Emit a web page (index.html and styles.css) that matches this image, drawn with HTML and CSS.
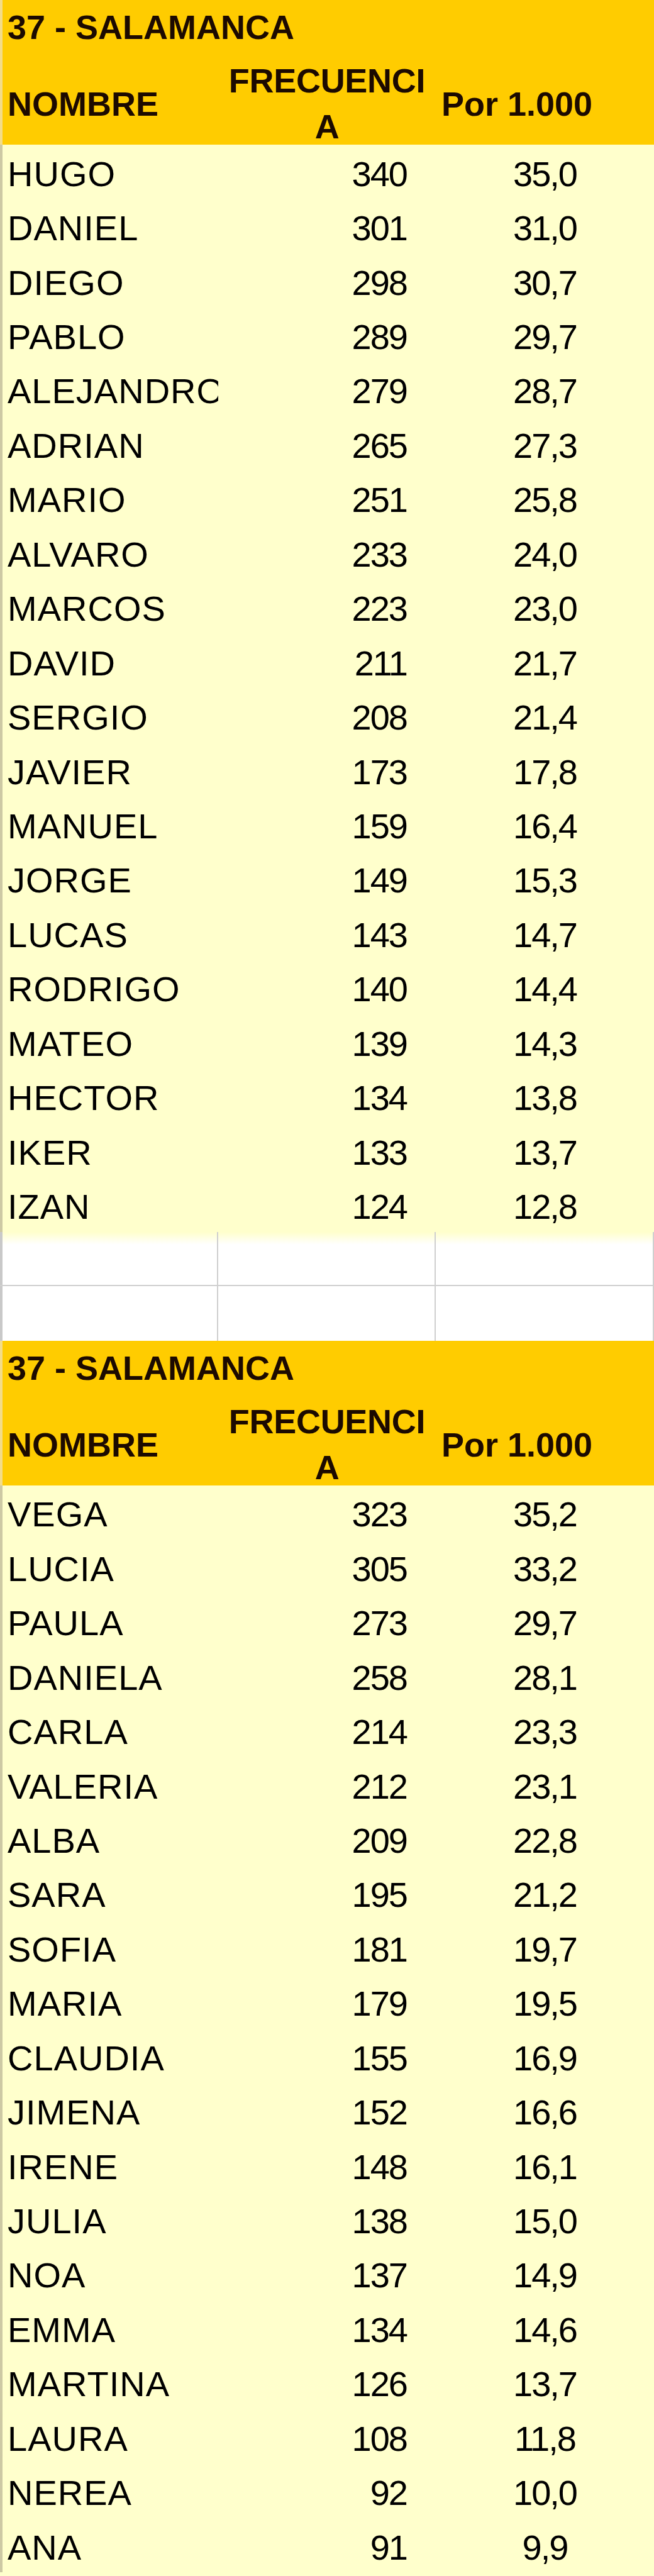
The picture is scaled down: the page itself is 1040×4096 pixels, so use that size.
FILE: index.html
```html
<!DOCTYPE html>
<html lang="es">
<head>
<meta charset="utf-8">
<title>37 - SALAMANCA</title>
<link rel="stylesheet" href="styles.css">
</head>
<body>
<div class="sheet">
  <section class="table">
    <div class="hdr">
      <div class="title">37 - SALAMANCA</div>
      <div class="cols">
        <div class="h-name">NOMBRE</div>
        <div class="h-freq">FRECUENCIA</div>
        <div class="h-per">Por 1.000</div>
      </div>
    </div>
    <div class="row"><div class="n">HUGO</div><div class="f">340</div><div class="p">35,0</div></div>
    <div class="row"><div class="n">DANIEL</div><div class="f">301</div><div class="p">31,0</div></div>
    <div class="row"><div class="n">DIEGO</div><div class="f">298</div><div class="p">30,7</div></div>
    <div class="row"><div class="n">PABLO</div><div class="f">289</div><div class="p">29,7</div></div>
    <div class="row"><div class="n">ALEJANDRO</div><div class="f">279</div><div class="p">28,7</div></div>
    <div class="row"><div class="n">ADRIAN</div><div class="f">265</div><div class="p">27,3</div></div>
    <div class="row"><div class="n">MARIO</div><div class="f">251</div><div class="p">25,8</div></div>
    <div class="row"><div class="n">ALVARO</div><div class="f">233</div><div class="p">24,0</div></div>
    <div class="row"><div class="n">MARCOS</div><div class="f">223</div><div class="p">23,0</div></div>
    <div class="row"><div class="n">DAVID</div><div class="f">211</div><div class="p">21,7</div></div>
    <div class="row"><div class="n">SERGIO</div><div class="f">208</div><div class="p">21,4</div></div>
    <div class="row"><div class="n">JAVIER</div><div class="f">173</div><div class="p">17,8</div></div>
    <div class="row"><div class="n">MANUEL</div><div class="f">159</div><div class="p">16,4</div></div>
    <div class="row"><div class="n">JORGE</div><div class="f">149</div><div class="p">15,3</div></div>
    <div class="row"><div class="n">LUCAS</div><div class="f">143</div><div class="p">14,7</div></div>
    <div class="row"><div class="n">RODRIGO</div><div class="f">140</div><div class="p">14,4</div></div>
    <div class="row"><div class="n">MATEO</div><div class="f">139</div><div class="p">14,3</div></div>
    <div class="row"><div class="n">HECTOR</div><div class="f">134</div><div class="p">13,8</div></div>
    <div class="row"><div class="n">IKER</div><div class="f">133</div><div class="p">13,7</div></div>
    <div class="row"><div class="n">IZAN</div><div class="f">124</div><div class="p">12,8</div></div>
  </section>

  <div class="blank blank-first"><div></div><div></div><div></div></div>
  <div class="blank"><div></div><div></div><div></div></div>

  <section class="table">
    <div class="hdr">
      <div class="title">37 - SALAMANCA</div>
      <div class="cols">
        <div class="h-name">NOMBRE</div>
        <div class="h-freq">FRECUENCIA</div>
        <div class="h-per">Por 1.000</div>
      </div>
    </div>
    <div class="row"><div class="n">VEGA</div><div class="f">323</div><div class="p">35,2</div></div>
    <div class="row"><div class="n">LUCIA</div><div class="f">305</div><div class="p">33,2</div></div>
    <div class="row"><div class="n">PAULA</div><div class="f">273</div><div class="p">29,7</div></div>
    <div class="row"><div class="n">DANIELA</div><div class="f">258</div><div class="p">28,1</div></div>
    <div class="row"><div class="n">CARLA</div><div class="f">214</div><div class="p">23,3</div></div>
    <div class="row"><div class="n">VALERIA</div><div class="f">212</div><div class="p">23,1</div></div>
    <div class="row"><div class="n">ALBA</div><div class="f">209</div><div class="p">22,8</div></div>
    <div class="row"><div class="n">SARA</div><div class="f">195</div><div class="p">21,2</div></div>
    <div class="row"><div class="n">SOFIA</div><div class="f">181</div><div class="p">19,7</div></div>
    <div class="row"><div class="n">MARIA</div><div class="f">179</div><div class="p">19,5</div></div>
    <div class="row"><div class="n">CLAUDIA</div><div class="f">155</div><div class="p">16,9</div></div>
    <div class="row"><div class="n">JIMENA</div><div class="f">152</div><div class="p">16,6</div></div>
    <div class="row"><div class="n">IRENE</div><div class="f">148</div><div class="p">16,1</div></div>
    <div class="row"><div class="n">JULIA</div><div class="f">138</div><div class="p">15,0</div></div>
    <div class="row"><div class="n">NOA</div><div class="f">137</div><div class="p">14,9</div></div>
    <div class="row"><div class="n">EMMA</div><div class="f">134</div><div class="p">14,6</div></div>
    <div class="row"><div class="n">MARTINA</div><div class="f">126</div><div class="p">13,7</div></div>
    <div class="row"><div class="n">LAURA</div><div class="f">108</div><div class="p">11,8</div></div>
    <div class="row"><div class="n">NEREA</div><div class="f">92</div><div class="p">10,0</div></div>
    <div class="row"><div class="n">ANA</div><div class="f">91</div><div class="p">9,9</div></div>
  </section>
</div>
</body>
</html>
```

FILE: styles.css
```css
html, body {
  margin: 0;
  padding: 0;
}

body {
  background: #ffffcc;
  font-family: "Liberation Sans", Arial, sans-serif;
  color: #000;
}

.sheet {
  width: 1040px;
}

/* Header block */
.hdr {
  background: #ffcc00;
  color: #1c0a00;
  font-weight: bold;
  font-size: 54px;
  box-shadow: inset 4px 0 0 #f3dc88;
}

.title {
  height: 92px;
  box-sizing: border-box;
  padding: 0 0 6px 12px;
  line-height: 86px;
  white-space: nowrap;
}

.cols {
  display: grid;
  grid-template-columns: 347px 346px 347px;
  height: 138px;
  align-items: center;
}

.h-name {
  padding-left: 12px;
}

.h-freq {
  padding: 0 10px;
  text-align: center;
  line-height: 73px;
  word-break: break-all;
  letter-spacing: -0.3px;
}

.h-per {
  padding-left: 9px;
  white-space: nowrap;
}

/* Data rows */
.row {
  display: grid;
  grid-template-columns: 347px 346px 347px;
  height: 86.45px;
  box-sizing: border-box;
  padding-top: 7px;
  align-items: center;
  font-size: 56px;
  line-height: 1.25;
  box-shadow: inset 4px 0 0 #cdc9a4;
}

.n {
  padding-left: 12px;
  overflow: hidden;
  white-space: nowrap;
  letter-spacing: 1px;
}

.f {
  text-align: right;
  padding-right: 46px;
  letter-spacing: -2px;
}

.p {
  text-align: center;
  letter-spacing: -2px;
}

/* Empty spreadsheet rows */
.blank {
  display: grid;
  grid-template-columns: 347px 346px 347px;
  height: 86.45px;
  background: #ffffff;
  box-shadow: inset 4px 0 0 #c9c9c9;
}

.blank > div {
  border-right: 2px solid #cfcfcf;
}

.blank-first {
  background: linear-gradient(#ffffcc, #ffffff 20px);
}

.blank-first > div {
  border-bottom: 2px solid #cfcfcf;
}
```
